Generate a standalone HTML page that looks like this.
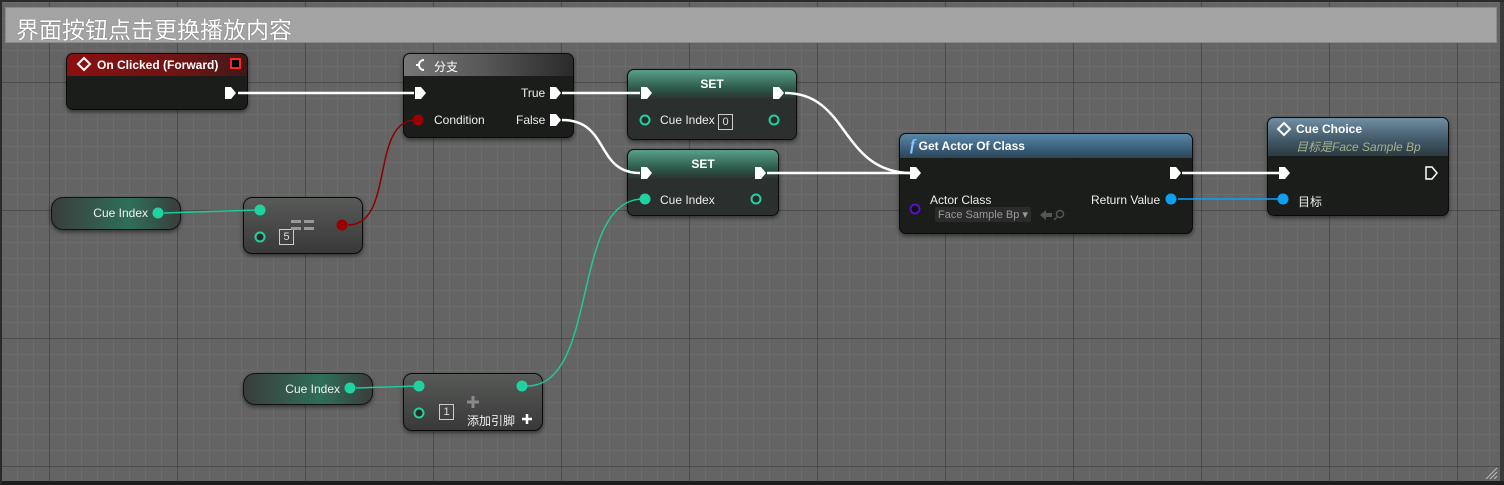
<!DOCTYPE html>
<html><head><meta charset="utf-8"><style>
*{margin:0;padding:0;box-sizing:border-box}
body{width:1504px;height:485px;overflow:hidden;position:relative;font-family:"Liberation Sans","Noto Sans CJK SC",sans-serif;color:#f0f0f0;
background-color:#646464;
background-image:
linear-gradient(90deg,rgba(40,40,40,.45) 1px,transparent 1px),
linear-gradient(0deg,rgba(40,40,40,.45) 1px,transparent 1px),
linear-gradient(90deg,#6c6c6c 1px,transparent 1px),
linear-gradient(0deg,#6c6c6c 1px,transparent 1px);
background-size:128px 128px,128px 128px,16px 16px,16px 16px;
background-position:49px 83px,49px 83px,1px 3px,1px 3px;}
.comment{position:absolute;left:5px;top:7px;width:1492px;height:36px;background:#a4a4a4;border:1px solid #8a8a8a;font-size:23px;color:#fff;padding:3px 0 0 10px;text-shadow:0 0 1px #555}
.node{position:absolute;border-radius:7px;background:rgba(22,24,22,.93);border:1px solid #0a0a0a;box-shadow:0 2px 4px rgba(0,0,0,.5);overflow:hidden;font-size:12px}
.hd{height:22px;font-weight:bold;font-size:12px;padding:4px 0 0 8px;color:#fff}
.pure{background:linear-gradient(#585a58,#383938);}
.get{position:absolute;border-radius:12px;border:1px solid #111;background:linear-gradient(90deg,#3a3d3b,#2f6e5a 60%,#3a3d3b);box-shadow:0 2px 4px rgba(0,0,0,.5);font-size:12px;text-align:right}
.t{position:absolute;font-size:12px;color:#eee;white-space:nowrap}
.box{position:absolute;border:1px solid #ccc;width:15px;height:16px;font-size:11px;text-align:center;line-height:14px;color:#ddd}
svg{position:absolute;left:0;top:0}
</style></head><body>
<div class="comment">界面按钮点击更换播放内容</div>

<div class="node" style="left:66px;top:53px;width:182px;height:57px">
<div class="hd" style="background:linear-gradient(90deg,#8a1010,#6a1515 70%,#3a1a1a);padding-left:30px">On Clicked (Forward)</div>
</div>
<div class="node" style="left:403px;top:53px;width:171px;height:85px">
<div class="hd" style="background:linear-gradient(90deg,#777,#555 50%,#2a2a2a);padding-left:30px;font-weight:normal">分支</div>
</div>
<div class="node" style="left:627px;top:69px;width:170px;height:71px;background:rgba(40,44,42,.95)">
<div class="hd" style="height:30px;background:linear-gradient(#5aa08a,#2e5a4c 60%,rgba(40,44,42,0));text-align:center;padding:7px 0 0 0">SET</div>
</div>
<div class="node" style="left:627px;top:149px;width:152px;height:67px;background:rgba(40,44,42,.95)">
<div class="hd" style="height:30px;background:linear-gradient(#5aa08a,#2e5a4c 60%,rgba(40,44,42,0));text-align:center;padding:7px 0 0 0">SET</div>
</div>
<div class="node" style="left:899px;top:133px;width:294px;height:101px">
<div class="hd" style="height:24px;background:linear-gradient(#5a87a8,#3a5f7a 60%,#2d4455);padding:3px 0 0 10px"><i style="font-family:'Liberation Serif',serif;color:#8cc8ff;font-size:16px">f</i> Get Actor Of Class</div>
</div>
<div class="node" style="left:1267px;top:117px;width:182px;height:99px">
<div style="height:38px;background:linear-gradient(#708ea3,#405766 60%,#2c3a42);padding:4px 0 0 28px;font-weight:bold;color:#fff">Cue Choice<div style="font-weight:normal;font-style:italic;color:#a7b08c;margin-top:2px;font-size:12px">目标是Face Sample Bp</div></div>
</div>
<div class="get" style="left:51px;top:197px;width:130px;height:33px;padding:8px 32px 0 0">Cue Index</div>
<div class="get" style="left:243px;top:373px;width:130px;height:32px;padding:8px 32px 0 0">Cue Index</div>
<div class="node pure" style="left:243px;top:197px;width:120px;height:57px;border-radius:9px"></div>
<div class="node pure" style="left:403px;top:373px;width:140px;height:58px;border-radius:9px"></div>

<div class="t" style="left:521px;top:86px">True</div>
<div class="t" style="left:434px;top:113px">Condition</div>
<div class="t" style="left:516px;top:113px">False</div>
<div class="t" style="left:660px;top:113px">Cue Index</div>
<div class="box" style="left:718px;top:114px">0</div>
<div class="t" style="left:660px;top:193px">Cue Index</div>
<div class="t" style="left:930px;top:193px">Actor Class</div>
<div class="t" style="left:1091px;top:193px">Return Value</div>
<div class="t" style="left:935px;top:207px;background:#2a2b2a;color:#9a9a9a;font-size:11px;padding:1px 3px;border-radius:2px">Face Sample Bp ▾</div>
<div class="t" style="left:1298px;top:193px">目标</div>
<div class="box" style="left:279px;top:229px">5</div>
<div class="box" style="left:439px;top:404px">1</div>
<div class="t" style="left:467px;top:412px">添加引脚</div>

<svg width="1504" height="485" viewBox="0 0 1504 485">
<defs>
<g id="ex"><path d="M-5,-6 H1 L6,0 L1,6 H-5 Z" fill="#fff"/></g>
</defs>
<g fill="none" stroke-width="2.5">
<path d="M238,93 H414" stroke="#fff"/>
<path d="M562,93 H640" stroke="#fff"/>
<path d="M785,93 C850,93 840,173 912,173" stroke="#fff"/>
<path d="M562,120 C610,120 595,173 640,173" stroke="#fff"/>
<path d="M767,173 H912" stroke="#fff"/>
<path d="M1182,173 H1282" stroke="#fff"/>
<path d="M1178,199 H1282" stroke="#0aa0ff" stroke-width="1.5"/>
<path d="M348,225 C395,225 370,120 416,120" stroke="#8b0000" stroke-width="1.5"/>
<path d="M164,213 L258,210" stroke="#20c89a" stroke-width="1.5"/>
<path d="M356,388 L418,386" stroke="#20c89a" stroke-width="1.5"/>
<path d="M527,386 C600,386 570,199 643,199" stroke="#20c89a" stroke-width="1.5"/>
</g>
<use href="#ex" x="230" y="93"/><use href="#ex" x="420" y="93"/><use href="#ex" x="555" y="93"/><use href="#ex" x="555" y="120"/>
<use href="#ex" x="646" y="93"/><use href="#ex" x="778" y="93"/><use href="#ex" x="646" y="173"/><use href="#ex" x="760" y="173"/>
<use href="#ex" x="915" y="173"/><use href="#ex" x="1175" y="173"/><use href="#ex" x="1284" y="173"/>
<path d="M1426,167 H1432 L1437,173 L1432,179 H1426 Z" fill="none" stroke="#fff" stroke-width="1.5"/>
<rect x="231" y="59" width="9" height="9" fill="#000" stroke="#f22" stroke-width="2"/>
<path d="M84,58 L90,64 L84,70 L78,64 Z" fill="none" stroke="#fff" stroke-width="2"/>
<path d="M1284,123 L1290,129 L1284,135 L1278,129 Z" fill="none" stroke="#fff" stroke-width="2"/>
<path d="M424,60 A5,5 0 1 0 424,70 M420,65 H416" fill="none" stroke="#fff" stroke-width="2"/>
<!-- == sign -->
<rect x="291" y="220" width="10" height="3" fill="#999"/><rect x="304" y="220" width="10" height="3" fill="#999"/>
<rect x="291" y="227" width="10" height="3" fill="#999"/><rect x="304" y="227" width="10" height="3" fill="#999"/>
<!-- plus icons -->
<path d="M473,396 V408 M467,402 H479" stroke="#8a8a8a" stroke-width="3"/>
<path d="M527,414 V424 M522,419 H532" stroke="#fff" stroke-width="2.5"/>
<!-- arrow / search -->
<path d="M1040,215 L1046,210 V213 H1052 V217 H1046 V220 Z" fill="#555"/>
<circle cx="1060" cy="214" r="3.5" fill="none" stroke="#555" stroke-width="1.5"/><path d="M1057,217 L1054,220" stroke="#555" stroke-width="1.5"/>
<g fill="#20d2a0">
<circle cx="158" cy="213" r="5.5"/><circle cx="260" cy="210" r="5.5"/><circle cx="350" cy="388" r="5.5"/><circle cx="419" cy="386" r="5.5"/><circle cx="522" cy="386" r="5.5"/><circle cx="645" cy="199" r="5.5"/>
</g>
<g fill="#2a2a2a" stroke="#20d2a0" stroke-width="2">
<circle cx="645" cy="120" r="4.5"/><circle cx="774" cy="120" r="4.5"/><circle cx="756" cy="199" r="4.5"/><circle cx="260" cy="237" r="4.5"/><circle cx="419" cy="413" r="4.5"/>
</g>
<circle cx="342" cy="225" r="5.5" fill="#9a0000"/><circle cx="418" cy="120" r="5.5" fill="#9a0000"/>
<circle cx="915" cy="209" r="4.5" fill="#111" stroke="#5a10c8" stroke-width="2"/>
<circle cx="1171" cy="199" r="5.5" fill="#10a0f0"/><circle cx="1283" cy="199" r="5.5" fill="#10a0f0"/>
<path d="M1486,479 L1497,468 M1490,479 L1497,472 M1494,479 L1497,476" stroke="#bbb" stroke-width="1"/>
<rect x="1500" y="0" width="4" height="485" fill="#3a3a3a"/>
<rect x="0" y="481" width="1504" height="4" fill="#1e1e1e"/>
<rect x="0" y="0" width="1504" height="2" fill="#2a2a2a"/>
<rect x="0" y="0" width="2" height="485" fill="#2a2a2a"/>
</svg>
</body></html>
